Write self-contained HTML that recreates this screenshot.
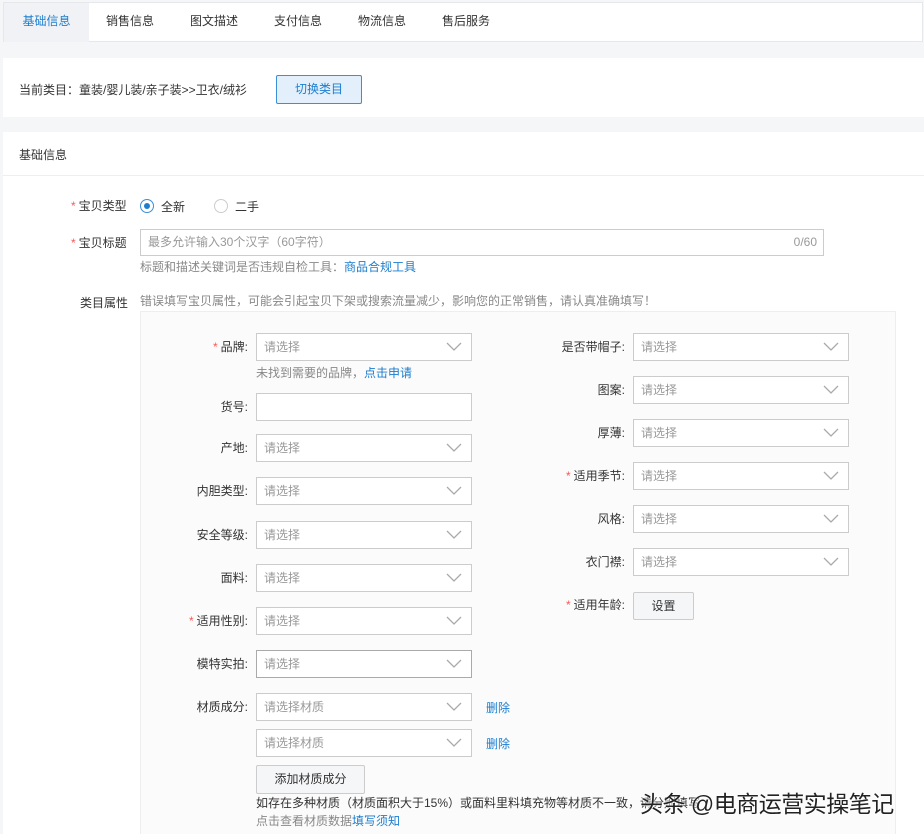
<!DOCTYPE html>
<html><head><meta charset="utf-8"><style>
*{box-sizing:border-box;margin:0;padding:0}
html,body{width:924px;height:834px;overflow:hidden}
body{background:#f5f6f8;font-family:"Liberation Sans","Noto Sans CJK SC",sans-serif;font-size:12px;color:#333;position:relative}
.a{position:absolute}
.tabs{left:3px;top:2px;width:920px;height:40px;background:#fff;border:1px solid #e6e8eb}
.tab{position:absolute;top:0;height:39px;line-height:36px;font-size:12px;color:#333}
.lbl{position:absolute;text-align:right;width:120px;font-size:12px;color:#333;line-height:28px}
.req{color:#f55;margin-right:3px}
.sel{position:absolute;width:216px;height:28px;border:1px solid #ccc;background:#fff;color:#999;line-height:26px;padding-left:7px}
.sel svg{position:absolute;right:9px;top:8px}
.btn{position:absolute;border:1px solid #ccc;background:#f5f6f8;border-radius:2px;text-align:center;color:#333}
.blue{color:#1c7ecf}
.gray{color:#999}
</style></head><body>
<div class="a tabs">
<div class="tab" style="left:0;width:85px;background:#f0f2f5;color:#1c7ecf;text-align:center">基础信息</div>
<div class="tab" style="left:102px">销售信息</div>
<div class="tab" style="left:186px">图文描述</div>
<div class="tab" style="left:270px">支付信息</div>
<div class="tab" style="left:354px">物流信息</div>
<div class="tab" style="left:438px">售后服务</div>
</div>
<div class="a" style="left:3px;top:58px;width:921px;height:59px;background:#fff"></div>
<div class="a" style="left:19px;top:81px">当前类目：童装/婴儿装/亲子装&gt;&gt;卫衣/绒衫</div>
<div class="a" style="left:276px;top:75px;width:86px;height:29px;border:1px solid #3b8ed8;border-radius:2px;background:#e3effb;color:#1c7ecf;text-align:center;line-height:27px">切换类目</div>
<div class="a" style="left:3px;top:132px;width:921px;height:702px;background:#fff"></div>
<div class="a" style="left:19px;top:146px">基础信息</div>
<div class="a" style="left:3px;top:175px;width:921px;height:1px;background:#eceef0"></div>

<div class="a" style="left:71px;top:197px"><span class="req">*</span>宝贝类型</div>
<div class="a" style="left:140px;top:199px;width:14px;height:14px;border:1px solid #3b8ed8;border-radius:50%"><div style="position:absolute;left:3px;top:3px;width:6px;height:6px;border-radius:50%;background:#1c7ecf"></div></div>
<div class="a" style="left:161px;top:198px">全新</div>
<div class="a" style="left:214px;top:199px;width:14px;height:14px;border:1px solid #ccc;border-radius:50%"></div>
<div class="a" style="left:235px;top:198px">二手</div>

<div class="a" style="left:71px;top:234px"><span class="req">*</span>宝贝标题</div>
<div class="a" style="left:140px;top:229px;width:684px;height:27px;border:1px solid #ccc;color:#999;line-height:25px;padding-left:7px">最多允许输入30个汉字（60字符）<span style="position:absolute;right:6px">0/60</span></div>
<div class="a gray" style="left:140px;top:258px;color:#888">标题和描述关键词是否违规自检工具：<span class="blue">商品合规工具</span></div>

<div class="a" style="left:80px;top:294px">类目属性</div>
<div class="a gray" style="left:140px;top:292px;color:#888">错误填写宝贝属性，可能会引起宝贝下架或搜索流量减少，影响您的正常销售，请认真准确填写！</div>
<div class="a" style="left:140px;top:311px;width:756px;height:530px;background:#fbfbfb;border:1px solid #eee"></div>

<div class="lbl" style="left:128px;top:333px"><span class="req">*</span>品牌:</div>
<div class="sel" style="left:256px;top:333px">请选择<svg width="16" height="10"><path d="M1 1l7 7 7-7" fill="none" stroke="#aaa" stroke-width="1.3"/></svg></div>
<div class="a gray" style="left:256px;top:364px;color:#888">未找到需要的品牌，<span class="blue">点击申请</span></div>
<div class="lbl" style="left:128px;top:393px">货号:</div>
<div class="sel" style="left:256px;top:393px"></div>
<div class="lbl" style="left:128px;top:434px">产地:</div>
<div class="sel" style="left:256px;top:434px">请选择<svg width="16" height="10"><path d="M1 1l7 7 7-7" fill="none" stroke="#aaa" stroke-width="1.3"/></svg></div>
<div class="lbl" style="left:128px;top:477px">内胆类型:</div>
<div class="sel" style="left:256px;top:477px">请选择<svg width="16" height="10"><path d="M1 1l7 7 7-7" fill="none" stroke="#aaa" stroke-width="1.3"/></svg></div>
<div class="lbl" style="left:128px;top:521px">安全等级:</div>
<div class="sel" style="left:256px;top:521px">请选择<svg width="16" height="10"><path d="M1 1l7 7 7-7" fill="none" stroke="#aaa" stroke-width="1.3"/></svg></div>
<div class="lbl" style="left:128px;top:564px">面料:</div>
<div class="sel" style="left:256px;top:564px">请选择<svg width="16" height="10"><path d="M1 1l7 7 7-7" fill="none" stroke="#aaa" stroke-width="1.3"/></svg></div>
<div class="lbl" style="left:128px;top:607px"><span class="req">*</span>适用性别:</div>
<div class="sel" style="left:256px;top:607px">请选择<svg width="16" height="10"><path d="M1 1l7 7 7-7" fill="none" stroke="#aaa" stroke-width="1.3"/></svg></div>
<div class="lbl" style="left:128px;top:650px">模特实拍:</div>
<div class="sel" style="left:256px;top:650px;border-color:#aaa">请选择<svg width="16" height="10"><path d="M1 1l7 7 7-7" fill="none" stroke="#aaa" stroke-width="1.3"/></svg></div>
<div class="lbl" style="left:128px;top:693px">材质成分:</div>
<div class="sel" style="left:256px;top:693px">请选择材质<svg width="16" height="10"><path d="M1 1l7 7 7-7" fill="none" stroke="#aaa" stroke-width="1.3"/></svg></div>
<div class="a blue" style="left:486px;top:699px">删除</div>
<div class="sel" style="left:256px;top:729px">请选择材质<svg width="16" height="10"><path d="M1 1l7 7 7-7" fill="none" stroke="#aaa" stroke-width="1.3"/></svg></div>
<div class="a blue" style="left:486px;top:735px">删除</div>
<div class="btn" style="left:256px;top:765px;width:109px;height:29px;line-height:27px">添加材质成分</div>
<div class="a" style="left:256px;top:794px">如存在多种材质（材质面积大于15%）或面料里料填充物等材质不一致，请分别填写</div>
<div class="a gray" style="left:256px;top:812px;color:#888">点击查看材质数据<span class="blue">填写须知</span></div>

<div class="lbl" style="left:505px;top:333px">是否带帽子:</div>
<div class="sel" style="left:633px;top:333px">请选择<svg width="16" height="10"><path d="M1 1l7 7 7-7" fill="none" stroke="#aaa" stroke-width="1.3"/></svg></div>
<div class="lbl" style="left:505px;top:376px">图案:</div>
<div class="sel" style="left:633px;top:376px">请选择<svg width="16" height="10"><path d="M1 1l7 7 7-7" fill="none" stroke="#aaa" stroke-width="1.3"/></svg></div>
<div class="lbl" style="left:505px;top:419px">厚薄:</div>
<div class="sel" style="left:633px;top:419px">请选择<svg width="16" height="10"><path d="M1 1l7 7 7-7" fill="none" stroke="#aaa" stroke-width="1.3"/></svg></div>
<div class="lbl" style="left:505px;top:462px"><span class="req">*</span>适用季节:</div>
<div class="sel" style="left:633px;top:462px">请选择<svg width="16" height="10"><path d="M1 1l7 7 7-7" fill="none" stroke="#aaa" stroke-width="1.3"/></svg></div>
<div class="lbl" style="left:505px;top:505px">风格:</div>
<div class="sel" style="left:633px;top:505px">请选择<svg width="16" height="10"><path d="M1 1l7 7 7-7" fill="none" stroke="#aaa" stroke-width="1.3"/></svg></div>
<div class="lbl" style="left:505px;top:548px">衣门襟:</div>
<div class="sel" style="left:633px;top:548px">请选择<svg width="16" height="10"><path d="M1 1l7 7 7-7" fill="none" stroke="#aaa" stroke-width="1.3"/></svg></div>
<div class="lbl" style="left:505px;top:591px"><span class="req">*</span>适用年龄:</div>
<div class="btn" style="left:633px;top:592px;width:61px;height:28px;line-height:26px">设置</div>

<div class="a" style="left:640px;top:785px;font-size:23px;letter-spacing:-0.5px;color:#222;text-shadow:0 0 2px #fff,0 0 2px #fff">头条 @电商运营实操笔记</div>
</body></html>
